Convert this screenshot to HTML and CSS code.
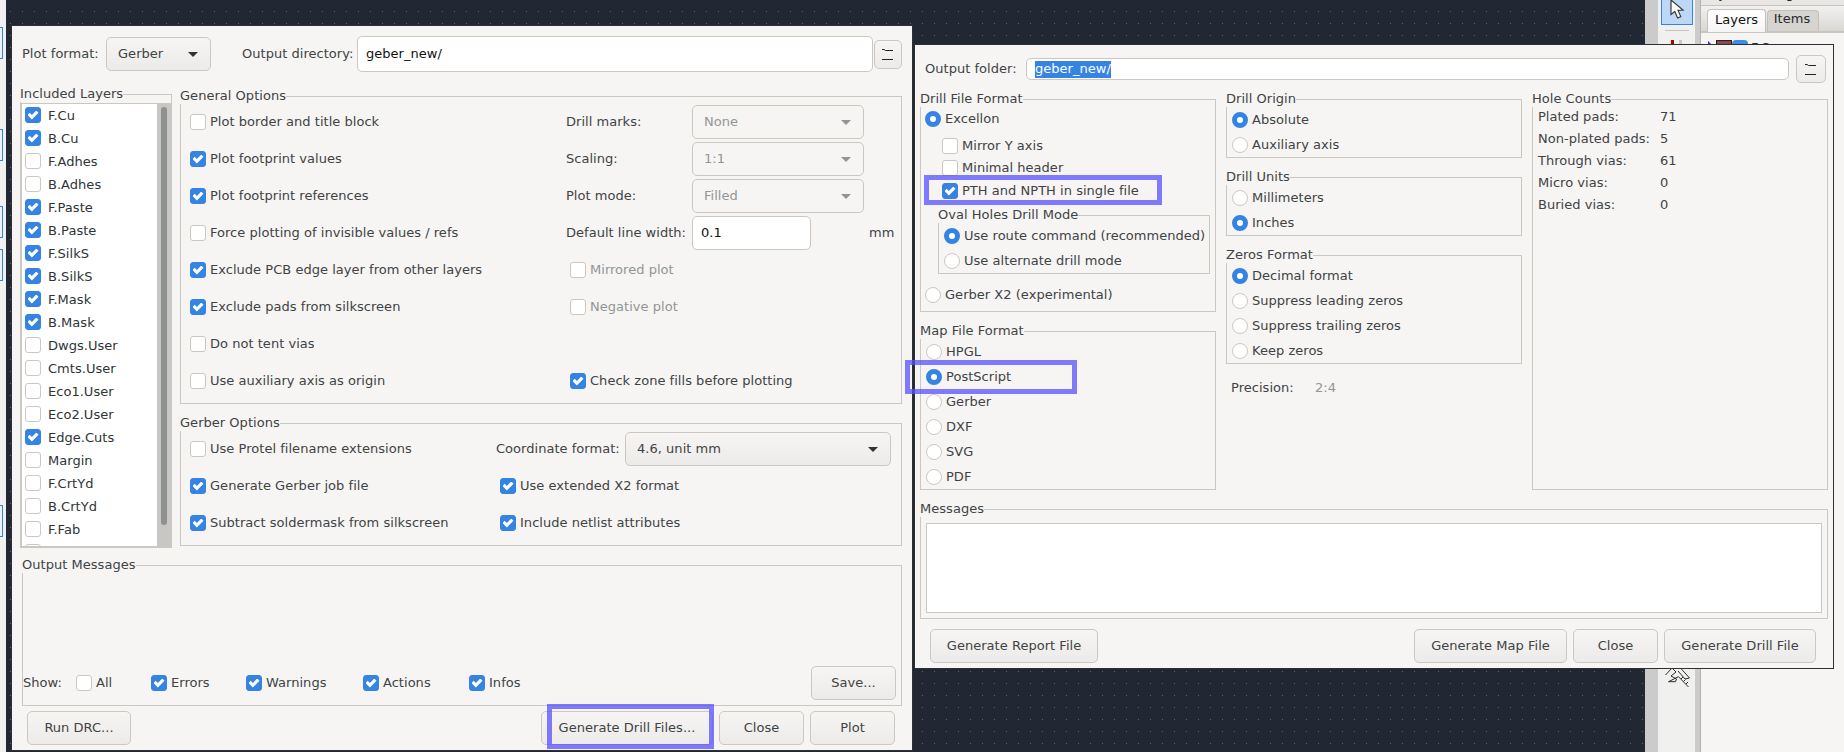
FILE: index.html
```html
<!DOCTYPE html>
<html>
<head>
<meta charset="utf-8">
<title>Plot and drill dialogs</title>
<link rel="stylesheet" href="styles.css">
</head>
<body>
<div class="desktop">
  <div class="strip">
    <span class="strip-box box-a"></span>
    <span class="strip-box box-b"></span>
    <span class="strip-box box-c"></span>
    <span class="strip-box box-d"></span>
    <span class="strip-box box-e"></span>
  </div>
  <div class="canvas"></div>
  <div class="scroll-gutter"></div>
  <div class="toolbar">
    <div class="tool-active">
      <svg width="16" height="20" viewBox="0 0 16 20"><path d="M2 0 L2 14.5 L5.8 11.5 L8.6 18 L11.8 16.6 L9 10.4 L14 10 Z" fill="#fff" stroke="#3a3a3a" stroke-width="1.2"/></svg>
    </div>
    <div class="tool-sep"></div>
    <div class="tool-marks"><span class="mark-red"></span><span class="mark-grey"></span></div>
    <svg class="tool-hatch" width="28" height="30" viewBox="0 0 28 30"><path d="M2.5 15 L9 8 L13 12 L8 16 L13.5 19 L12.5 21.7 L5.5 21.7 L15.5 16.7 L25.5 27 M17.5 8 L26.5 18 L22 19 L15 11 M18 19 L20 17 M20.5 21.5 L22.5 19.5 M23 24 L25 22" fill="none" stroke="#2c2c2c" stroke-width="1"/></svg>
  </div>
  <div class="sash"></div>
  <div class="panel">
    <div class="panel-caption"><span>Layers Manager</span></div>
    <div class="tabs">
      <span class="tab tab-on">Layers</span>
      <span class="tab tab-off">Items</span>
    </div>
    <div class="layer-row">
      <span class="layer-arrow"></span>
      <span class="layer-red"></span>
      <span class="layer-blue"></span>
      <span>F.Cu</span>
    </div>
  </div>

  <div class="window plot-window">
    <div class="top-row">
      <span class="plot-format-label">Plot format:</span>
      <div class="select w-format">Gerber</div>
      <span class="outdir-label">Output directory:</span>
      <div class="input w-outdir">geber_new/</div>
      <button class="icon-btn w-folder">
        <svg width="12" height="14" viewBox="0 0 12 14"><path d="M0 2.5h2l1.5 1H11M0 12.5h11" fill="none" stroke="#222" stroke-width="1"/></svg>
      </button>
    </div>

    <div class="plot-main">
      <fieldset class="included">
        <legend>Included Layers</legend>
        <div class="layer-frame">
          <div class="layer-list">
            <label class="layer"><span class="check on"></span>F.Cu</label>
            <label class="layer"><span class="check on"></span>B.Cu</label>
            <label class="layer"><span class="check"></span>F.Adhes</label>
            <label class="layer"><span class="check"></span>B.Adhes</label>
            <label class="layer"><span class="check on"></span>F.Paste</label>
            <label class="layer"><span class="check on"></span>B.Paste</label>
            <label class="layer"><span class="check on"></span>F.SilkS</label>
            <label class="layer"><span class="check on"></span>B.SilkS</label>
            <label class="layer"><span class="check on"></span>F.Mask</label>
            <label class="layer"><span class="check on"></span>B.Mask</label>
            <label class="layer"><span class="check"></span>Dwgs.User</label>
            <label class="layer"><span class="check"></span>Cmts.User</label>
            <label class="layer"><span class="check"></span>Eco1.User</label>
            <label class="layer"><span class="check"></span>Eco2.User</label>
            <label class="layer"><span class="check on"></span>Edge.Cuts</label>
            <label class="layer"><span class="check"></span>Margin</label>
            <label class="layer"><span class="check"></span>F.CrtYd</label>
            <label class="layer"><span class="check"></span>B.CrtYd</label>
            <label class="layer"><span class="check"></span>F.Fab</label>
            <div class="layer"><span class="check"></span></div>
          </div>
          <div class="scrollbar"><div class="thumb"></div></div>
        </div>
      </fieldset>

      <div class="plot-options">
        <fieldset class="general">
          <legend>General Options</legend>
          <div class="opt-grid">
            <label class="opt"><span class="check"></span>Plot border and title block</label>
            <div class="field"><span class="field-label">Drill marks:</span><div class="select disabled w-drillsel">None</div></div>
            <label class="opt"><span class="check on"></span>Plot footprint values</label>
            <div class="field"><span class="field-label">Scaling:</span><div class="select disabled w-drillsel">1:1</div></div>
            <label class="opt"><span class="check on"></span>Plot footprint references</label>
            <div class="field"><span class="field-label">Plot mode:</span><div class="select disabled w-drillsel">Filled</div></div>
            <label class="opt"><span class="check"></span>Force plotting of invisible values / refs</label>
            <div class="field"><span class="field-label">Default line width:</span><div class="input w-linewidth">0.1</div><span class="unit">mm</span></div>
            <label class="opt"><span class="check on"></span>Exclude PCB edge layer from other layers</label>
            <label class="opt indent off"><span class="check"></span>Mirrored plot</label>
            <label class="opt"><span class="check on"></span>Exclude pads from silkscreen</label>
            <label class="opt indent off"><span class="check"></span>Negative plot</label>
            <label class="opt"><span class="check"></span>Do not tent vias</label>
            <span></span>
            <label class="opt"><span class="check"></span>Use auxiliary axis as origin</label>
            <label class="opt indent"><span class="check on"></span>Check zone fills before plotting</label>
          </div>
        </fieldset>

        <fieldset class="gerber">
          <legend>Gerber Options</legend>
          <div class="opt-grid gerber-grid">
            <label class="opt"><span class="check"></span>Use Protel filename extensions</label>
            <div class="field"><span class="coord-label">Coordinate format:</span><div class="select w-coord">4.6, unit mm</div></div>
            <label class="opt"><span class="check on"></span>Generate Gerber job file</label>
            <label class="opt indent"><span class="check on"></span>Use extended X2 format</label>
            <label class="opt"><span class="check on"></span>Subtract soldermask from silkscreen</label>
            <label class="opt indent"><span class="check on"></span>Include netlist attributes</label>
          </div>
        </fieldset>
      </div>
    </div>

    <fieldset class="output">
      <legend>Output Messages</legend>
      <div class="show-row">
        <span>Show:</span>
        <label class="opt"><span class="check"></span>All</label>
        <label class="opt"><span class="check on"></span>Errors</label>
        <label class="opt"><span class="check on"></span>Warnings</label>
        <label class="opt"><span class="check on"></span>Actions</label>
        <label class="opt"><span class="check on"></span>Infos</label>
        <button class="btn w-85 save">Save...</button>
      </div>
    </fieldset>

    <div class="actions plot-actions">
      <button class="btn w-drc">Run DRC...</button>
      <button class="btn w-gendrill push">Generate Drill Files...</button>
      <button class="btn w-85">Close</button>
      <button class="btn w-85">Plot</button>
    </div>
  </div>

  <div class="window drill-window">
    <div class="folder-row">
      <span class="folder-label">Output folder:</span>
      <div class="input w-folderpath"><span class="selected">geber_new/</span></div>
      <button class="icon-btn w-folder2">
        <svg width="12" height="14" viewBox="0 0 12 14"><path d="M0 2.5h2l1.5 1H11M0 12.5h11" fill="none" stroke="#222" stroke-width="1"/></svg>
      </button>
    </div>

    <div class="drill-grid">
      <div class="col">
        <fieldset class="h-format">
          <legend>Drill File Format</legend>
          <label class="opt flat excellon"><span class="radio on"></span>Excellon</label>
          <label class="opt flat sub first-sub"><span class="check"></span>Mirror Y axis</label>
          <label class="opt flat sub next-sub"><span class="check"></span>Minimal header</label>
          <label class="opt flat sub last-sub"><span class="check on"></span>PTH and NPTH in single file</label>
          <fieldset class="oval">
            <legend>Oval Holes Drill Mode</legend>
            <div class="radios">
              <label class="opt flat"><span class="radio on"></span>Use route command (recommended)</label>
              <label class="opt flat"><span class="radio"></span>Use alternate drill mode</label>
            </div>
          </fieldset>
          <label class="opt flat gerber-x2"><span class="radio"></span>Gerber X2 (experimental)</label>
        </fieldset>

        <fieldset class="h-map">
          <legend>Map File Format</legend>
          <div class="radios">
            <label class="opt flat"><span class="radio"></span>HPGL</label>
            <label class="opt flat"><span class="radio on"></span>PostScript</label>
            <label class="opt flat"><span class="radio"></span>Gerber</label>
            <label class="opt flat"><span class="radio"></span>DXF</label>
            <label class="opt flat"><span class="radio"></span>SVG</label>
            <label class="opt flat"><span class="radio"></span>PDF</label>
          </div>
        </fieldset>
      </div>

      <div class="col">
        <fieldset class="h-pair">
          <legend>Drill Origin</legend>
          <div class="radios">
            <label class="opt flat"><span class="radio on"></span>Absolute</label>
            <label class="opt flat"><span class="radio"></span>Auxiliary axis</label>
          </div>
        </fieldset>
        <fieldset class="h-pair next">
          <legend>Drill Units</legend>
          <div class="radios">
            <label class="opt flat"><span class="radio"></span>Millimeters</label>
            <label class="opt flat"><span class="radio on"></span>Inches</label>
          </div>
        </fieldset>
        <fieldset class="h-zeros next">
          <legend>Zeros Format</legend>
          <div class="radios">
            <label class="opt flat"><span class="radio on"></span>Decimal format</label>
            <label class="opt flat"><span class="radio"></span>Suppress leading zeros</label>
            <label class="opt flat"><span class="radio"></span>Suppress trailing zeros</label>
            <label class="opt flat"><span class="radio"></span>Keep zeros</label>
          </div>
        </fieldset>
        <div class="precision"><span class="precision-label">Precision:</span><span class="muted">2:4</span></div>
      </div>

      <div class="col">
        <fieldset class="h-holes">
          <legend>Hole Counts</legend>
          <div class="counts">
            <span>Plated pads:</span><span>71</span>
            <span>Non-plated pads:</span><span>5</span>
            <span>Through vias:</span><span>61</span>
            <span>Micro vias:</span><span>0</span>
            <span>Buried vias:</span><span>0</span>
          </div>
        </fieldset>
      </div>
    </div>

    <fieldset class="messages">
      <legend>Messages</legend>
      <div class="message-box"></div>
    </fieldset>

    <div class="actions drill-actions">
      <button class="btn w-report">Generate Report File</button>
      <button class="btn w-map push">Generate Map File</button>
      <button class="btn w-85">Close</button>
      <button class="btn w-gen">Generate Drill File</button>
    </div>
  </div>

  <div class="callout callout-gen"></div>
  <div class="callout callout-pth"></div>
  <div class="callout callout-ps"></div>
</div>
</body>
</html>
```

FILE: styles.css
```css
* {
  box-sizing: border-box;
}
body {
  margin: 0;
  font-family: 'DejaVu Sans', sans-serif;
  font-size: 13px;
  line-height: 16px;
  letter-spacing: 0.03px;
  color: #404344;
}
.desktop {
  position: relative;
  width: 1844px;
  height: 752px;
  display: flex;
  overflow: hidden;
  background: #f6f5f4;
}

/* background app */
.strip {
  width: 6px;
  background: #f1f1f0;
  display: flex;
  flex-direction: column;
  align-items: flex-start;
}
.strip-box {
  width: 3px;
  height: 32px;
  background: #eef3fa;
  border: 1px solid #3584e4;
  border-left: 0;
}
.box-a { margin-top: 27px; }
.box-b { margin-top: 70px; }
.box-c { margin-top: 45px; }
.box-d { margin-top: 11px; }
.box-e { margin-top: 224px; }
.canvas {
  width: 1639px;
  background-color: #212733;
  background-image: radial-gradient(circle at 0.5px 0.5px, #5d6371 0.6px, transparent 0.8px);
  background-size: 12px 12px;
  background-position: 4px 11px;
}
.scroll-gutter {
  width: 13px;
  background: #cbcbcb;
}
.toolbar {
  width: 37px;
  background: #f0f0ef;
  display: flex;
  flex-direction: column;
  align-items: center;
}
.tool-active {
  width: 32px;
  height: 26px;
  margin-top: -1px;
  background: #bcd8f6;
  border: 1px solid #3584e4;
  display: flex;
  justify-content: center;
  align-items: flex-start;
}
.tool-sep {
  width: 24px;
  height: 1px;
  margin-top: 5px;
  background: #c4c4c2;
}
.tool-marks {
  height: 6px;
  margin-top: 9px;
  display: flex;
  gap: 5px;
}
.mark-red {
  width: 3px;
  background: #b00000;
}
.mark-grey {
  width: 3px;
  background: #c8c8c8;
}
.tool-hatch {
  margin-top: 614px;
}
.sash {
  width: 5px;
  background: #cbcbcb;
}
.panel {
  width: 144px;
  border-left: 1px solid #b6b3ad;
  background: #f6f5f4;
}
.panel-caption {
  height: 5px;
  overflow: hidden;
  background: #e8e7e5;
  padding-left: 2px;
}
.panel-caption span {
  display: block;
  margin-top: -14px;
  color: #222;
}
.tabs {
  height: 28px;
  padding: 4px 0 0 6px;
  display: flex;
  align-items: flex-end;
  gap: 1px;
  background: linear-gradient(#f2f1f0, #d9d7d4);
  border-top: 1px solid #c9c5bd;
  border-bottom: 2px solid #c9c5bd;
}
.tab {
  width: 52px;
  height: 21px;
  text-align: center;
  color: #2a2a2a;
  background: #d6d4d0;
  border: 1px solid #c4c1bb;
  border-bottom: 0;
  border-radius: 4px 4px 0 0;
}
.tab-off {
  padding-right: 2px;
}
.tab-on {
  width: 59px;
  height: 23px;
  margin-bottom: -1px;
  background: linear-gradient(#fff, #f5f5f4);
  color: #111;
  padding-top: 2px;
}
.layer-row {
  margin: 7px 0 0 7px;
  display: flex;
  color: #2e3436;
}
.layer-arrow {
  width: 0;
  height: 0;
  margin: 1px 4px 0 0;
  border-left: 4px solid #2d2dd0;
  border-top: 4px solid transparent;
  border-bottom: 4px solid transparent;
}
.layer-red {
  width: 16px;
  height: 12px;
  background: #8f4650;
  border: 1px solid #222;
}
.layer-blue {
  width: 16px;
  height: 12px;
  margin-right: 3px;
  border-radius: 4px;
  background: #3f8ae6;
}

/* dialog windows, free on the desktop */
.window {
  position: absolute;
  background: #f6f5f4;
  border: 1px solid #2f3032;
}
.plot-window {
  left: 11px;
  top: 25px;
  width: 902px;
  height: 726px;
}
.drill-window {
  left: 914px;
  top: 44px;
  width: 920px;
  height: 625px;
}
.callout {
  position: absolute;
  border: 5px solid rgba(85, 80, 253, 0.75);
}
.callout-gen {
  left: 547px;
  top: 704px;
  width: 167px;
  height: 45px;
}
.callout-pth {
  left: 924px;
  top: 175px;
  width: 238px;
  height: 30px;
}
.callout-ps {
  left: 905px;
  top: 360px;
  width: 172px;
  height: 34px;
}

fieldset {
  margin: 0;
  padding: 0;
  min-width: 0;
  border: 1px solid #cbc8c1;
}
legend {
  padding: 0;
  margin-left: -1px;
  height: 16px;
  background: #f6f5f4;
}

/* controls */
.check,
.radio {
  flex: none;
  width: 16px;
  height: 16px;
  margin-right: 4px;
  background: #fff;
  border: 1px solid #cdc7c2;
  border-radius: 3px;
}
.check.on {
  background: #3584e4;
  border-color: #3584e4;
  display: flex;
  align-items: center;
  justify-content: center;
}
.check.on::after {
  content: "";
  width: 11px;
  height: 9px;
  background: #fff;
  clip-path: polygon(0 50%, 20% 25%, 40% 50%, 80% 0, 100% 25%, 40% 100%);
}
.radio {
  border-radius: 50%;
}
.radio.on {
  background: #fff;
  border: 5px solid #3584e4;
}
.select {
  height: 34px;
  padding: 0 12px 0 11px;
  display: flex;
  align-items: center;
  justify-content: space-between;
  background: linear-gradient(#f6f5f4, #edebe9);
  border: 1px solid #cdc7c2;
  border-radius: 5px;
}
.select::after {
  content: "";
  border-top: 5px solid #2e3436;
  border-left: 5px solid transparent;
  border-right: 5px solid transparent;
}
.select.disabled {
  background: #f6f5f4;
  color: #929595;
}
.select.disabled::after {
  border-top-color: #929595;
}
.input {
  display: flex;
  align-items: center;
  padding-left: 8px;
  background: #fff;
  color: #111;
  border: 1px solid #cdc7c2;
  border-radius: 5px;
}
.btn {
  height: 34px;
  padding: 0;
  font: inherit;
  letter-spacing: inherit;
  color: #404344;
  background: linear-gradient(#f6f5f4, #edebe9);
  border: 1px solid #cdc7c2;
  border-radius: 5px;
}
.icon-btn {
  padding: 0;
  display: flex;
  align-items: center;
  justify-content: center;
  background: linear-gradient(#f6f5f4, #edebe9);
  border: 1px solid #cdc7c2;
  border-radius: 5px;
}
.opt {
  display: flex;
  align-items: center;
}
.off {
  color: #929595;
}
.indent {
  margin-left: 4px;
}
.muted {
  color: #929595;
}

/* plot dialog */
.top-row {
  height: 46px;
  padding: 10px 0 0 10px;
  display: flex;
  align-items: center;
}
.plot-format-label {
  width: 84px;
}
.w-format {
  width: 105px;
}
.outdir-label {
  width: 115px;
  margin-left: 31px;
}
.w-outdir {
  width: 516px;
  height: 36px;
}
.w-folder {
  width: 28px;
  height: 29px;
  margin-left: 1px;
}
.plot-main {
  height: 462px;
  margin: 14px 0 0 8px;
  display: flex;
  gap: 8px;
}
.included {
  width: 152px;
}
.layer-frame {
  height: 444px;
  margin-top: 1px;
  display: flex;
  border: 1px solid #cbc8c1;
  border-right: 0;
}
.layer-list {
  width: 135px;
  height: 442px;
  background: #fff;
  overflow: hidden;
  color: #2e3436;
}
.layer {
  height: 23px;
  padding: 3px 0 0 3px;
  display: flex;
  align-items: flex-start;
  line-height: 18px;
}
.layer .check {
  margin-right: 7px;
}
.scrollbar {
  width: 14px;
  background: #c9c7c3;
  padding: 3px 4px;
}
.thumb {
  width: 6px;
  height: 418px;
  background: #8f9190;
  border-radius: 3px;
}
.plot-options {
  width: 722px;
  padding-top: 2px;
}
.general {
  height: 316px;
}
.gerber {
  height: 131px;
  margin-top: 11px;
}
.opt-grid {
  padding-left: 9px;
  display: grid;
  grid-template-columns: 376px 1fr;
  grid-auto-rows: 36px;
  row-gap: 1px;
}
.gerber-grid {
  grid-template-columns: 306px 1fr;
}
.field {
  display: flex;
  align-items: center;
}
.field-label {
  width: 126px;
}
.w-drillsel {
  width: 172px;
}
.w-linewidth {
  width: 119px;
  height: 34px;
}
.unit {
  margin-left: 58px;
}
.coord-label {
  width: 129px;
}
.w-coord {
  width: 266px;
}
.output {
  width: 880px;
  height: 149px;
  margin: 9px 0 0 10px;
}
.show-row {
  height: 127px;
  padding: 93px 5px 0 0;
  display: grid;
  grid-template-columns: 53px 75px 95px 117px 106px 1fr auto;
  align-items: center;
}
.actions {
  display: flex;
  gap: 6px;
}
.plot-actions {
  margin: 5px 0 0 15px;
  width: 868px;
}
.push {
  margin-left: auto;
}
.w-85 {
  width: 85px;
}
.w-drc {
  width: 104px;
}
.w-gendrill {
  width: 172px;
}

/* drill dialog */
.folder-row {
  height: 38px;
  padding: 10px 0 0 10px;
  display: flex;
  align-items: center;
}
.folder-label {
  width: 101px;
}
.w-folderpath {
  width: 763px;
  height: 22px;
}
.selected {
  height: 17px;
  background: #3584e4;
  color: #fff;
}
.w-folder2 {
  width: 30px;
  height: 28px;
  margin-left: 7px;
}
.drill-grid {
  height: 399px;
  margin-top: 8px;
  padding: 0 5px;
  display: grid;
  grid-template-columns: repeat(3, 296px);
  column-gap: 10px;
}
.h-format {
  height: 221px;
}
.h-map {
  height: 167px;
  margin-top: 11px;
}
.excellon {
  margin: 4px 0 0 4px;
}
.flat {
  height: 16px;
}
.sub {
  margin-left: 21px;
}
.first-sub {
  margin-top: 11px;
}
.next-sub {
  margin-top: 6px;
}
.last-sub {
  margin-top: 7px;
}
.oval {
  height: 67px;
  margin: 8px 5px 0 17px;
}
.gerber-x2 {
  margin: 13px 0 0 4px;
}
.radios {
  padding: 5px 0 0 5px;
  display: flex;
  flex-direction: column;
  gap: 9px;
}
.h-pair {
  height: 67px;
}
.h-zeros {
  height: 117px;
}
.next {
  margin-top: 11px;
}
.precision {
  margin: 16px 0 0 5px;
  display: flex;
}
.precision-label {
  width: 84px;
}
.h-holes {
  height: 399px;
}
.counts {
  margin-top: -1px;
  padding-left: 5px;
  display: grid;
  grid-template-columns: 122px 1fr;
  grid-auto-rows: 22px;
  align-items: center;
}
.messages {
  width: 908px;
  height: 118px;
  margin: 11px 0 0 5px;
}
.message-box {
  height: 90px;
  margin: 6px 5px 0;
  background: #fff;
  border: 1px solid #cbc8c1;
}
.drill-actions {
  margin: 10px 0 0 15px;
  width: 886px;
}
.w-report {
  width: 168px;
}
.w-map {
  width: 153px;
}
.w-gen {
  width: 152px;
}
```
